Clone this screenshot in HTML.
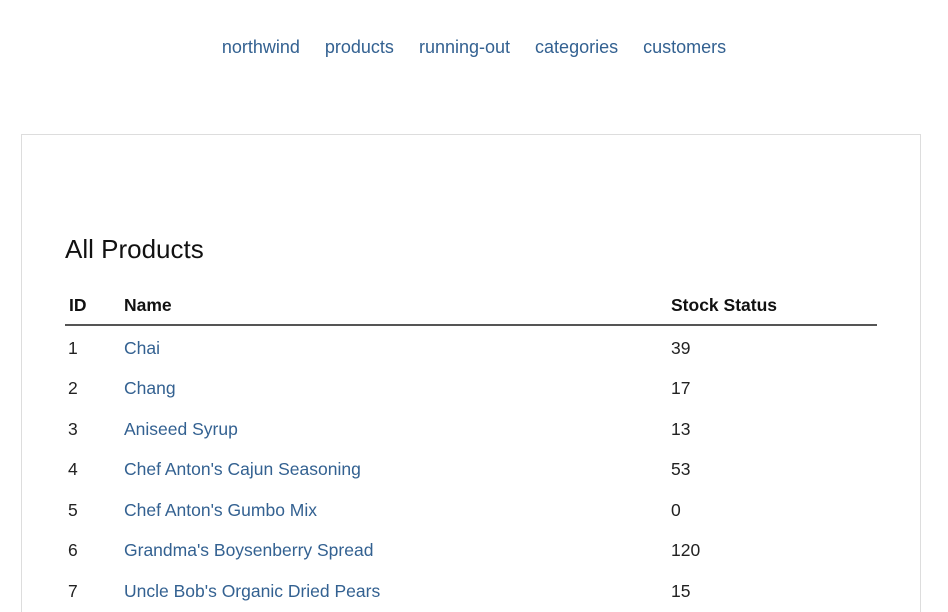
<!DOCTYPE html>
<html><head><style>
html,body{margin:0;background:#fff;font-family:"Liberation Sans",sans-serif;color:#222;width:948px;height:612px;overflow:hidden;position:relative}
a{color:#336191;text-decoration:none}
.nav{position:absolute;top:37px;left:0;width:948px;text-align:center;font-size:18px}
.nav a{margin:0 10px}
.card{position:absolute;left:21px;top:134px;width:898px;height:478px;border:1px solid #ddd;border-bottom:none}
h1{position:absolute;left:65px;top:234px;margin:0;font-weight:normal;font-size:26px;color:#111}
.th{position:absolute;top:295px;font-weight:bold;font-size:17.5px;color:#111}
.line{position:absolute;left:65px;top:324px;width:812px;height:2px;background:#555}
.c{position:absolute;font-size:17.5px;line-height:20px}
</style></head><body>
<div class="nav"><a>northwind</a> <a>products</a> <a>running-out</a> <a>categories</a> <a>customers</a></div>
<div class="card"></div>
<h1>All Products</h1>
<div class="th" style="left:69px">ID</div>
<div class="th" style="left:124px">Name</div>
<div class="th" style="left:671px">Stock Status</div>
<div class="line"></div>
<div class="c" style="left:68px;top:338px">1</div><a class="c" style="left:124px;top:338px">Chai</a><div class="c" style="left:671px;top:338px">39</div>
<div class="c" style="left:68px;top:378px">2</div><a class="c" style="left:124px;top:378px">Chang</a><div class="c" style="left:671px;top:378px">17</div>
<div class="c" style="left:68px;top:419px">3</div><a class="c" style="left:124px;top:419px">Aniseed Syrup</a><div class="c" style="left:671px;top:419px">13</div>
<div class="c" style="left:68px;top:459px">4</div><a class="c" style="left:124px;top:459px">Chef Anton's Cajun Seasoning</a><div class="c" style="left:671px;top:459px">53</div>
<div class="c" style="left:68px;top:500px">5</div><a class="c" style="left:124px;top:500px">Chef Anton's Gumbo Mix</a><div class="c" style="left:671px;top:500px">0</div>
<div class="c" style="left:68px;top:540px">6</div><a class="c" style="left:124px;top:540px">Grandma's Boysenberry Spread</a><div class="c" style="left:671px;top:540px">120</div>
<div class="c" style="left:68px;top:581px">7</div><a class="c" style="left:124px;top:581px">Uncle Bob's Organic Dried Pears</a><div class="c" style="left:671px;top:581px">15</div>
</body></html>
